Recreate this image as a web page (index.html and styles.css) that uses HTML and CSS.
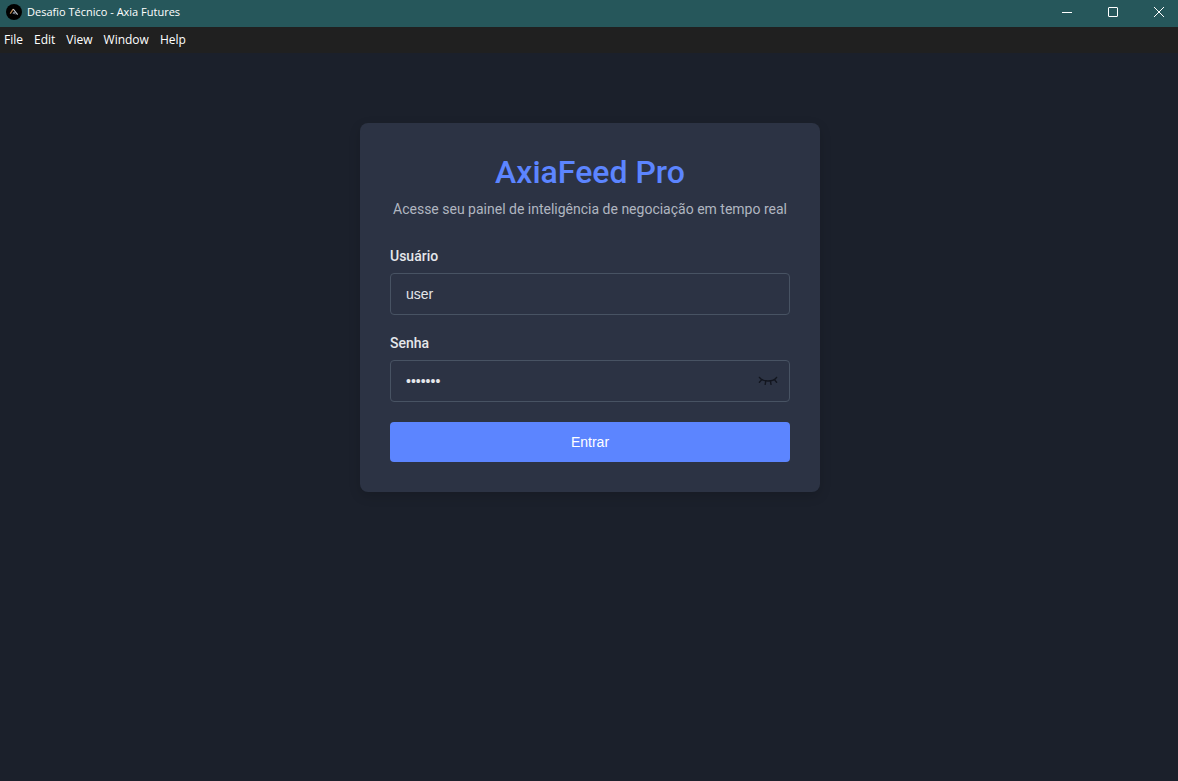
FILE: index.html
```html
<!DOCTYPE html>
<html lang="pt-BR">
<head>
<meta charset="utf-8">
<title>Desafio Técnico - Axia Futures</title>
<link rel="stylesheet" href="styles.css">
</head>
<body>
<header class="titlebar">
  <svg class="app-icon" width="16" height="16" viewBox="0 0 16 16" aria-hidden="true">
    <circle cx="8" cy="8" r="8" fill="#000"/>
    <path d="M4.2 9.6 L7.2 5.2" fill="none" stroke="#c08a54" stroke-width="1.2"/>
    <path d="M7.2 5 L11.6 10.6" fill="none" stroke="#c4c7ce" stroke-width="1.2"/>
    <path d="M7 10 L8 8 L9.2 10.4" fill="none" stroke="#8d96a6" stroke-width="1"/>
  </svg>
  <span class="window-title">Desafio Técnico - Axia Futures</span>
  <div class="window-controls">
    <button class="window-button" type="button" aria-label="Minimize">
      <svg width="10" height="10" viewBox="0 0 10 10"><path d="M0 5.5H10" stroke="#fff"/></svg>
    </button>
    <button class="window-button" type="button" aria-label="Maximize">
      <svg width="10" height="10" viewBox="0 0 10 10"><rect x=".5" y=".5" width="9" height="9" rx=".5" fill="none" stroke="#fff"/></svg>
    </button>
    <button class="window-button" type="button" aria-label="Close">
      <svg width="10" height="10" viewBox="0 0 10 10"><path d="M0 0L10 10M10 0L0 10" stroke="#fff"/></svg>
    </button>
  </div>
</header>
<nav class="menubar">
  <button class="menu-item" type="button">File</button>
  <button class="menu-item" type="button">Edit</button>
  <button class="menu-item" type="button">View</button>
  <button class="menu-item" type="button">Window</button>
  <button class="menu-item" type="button">Help</button>
</nav>
<main class="page">
  <form class="card">
    <h1 class="brand">AxiaFeed Pro</h1>
    <p class="subtitle">Acesse seu painel de inteligência de negociação em tempo real</p>
    <div class="field">
      <label class="label" for="user">Usuário</label>
      <input class="input" id="user" type="text" value="user">
    </div>
    <div class="field">
      <label class="label" for="password">Senha</label>
      <div class="password">
        <input class="input" id="password" type="password" value="senha12">
        <button class="reveal" type="button" aria-label="Mostrar senha">
          <svg width="20" height="20" viewBox="0 0 20 20" fill="none" stroke="#13161f" stroke-width="1.4" stroke-linecap="round">
            <path d="M1.4 7.4C4.4 12.2 15.6 12.2 18.6 7.4"/>
            <path d="M3.8 9.6L1.4 12.2M7.8 10.9L7.2 14.4M12.4 10.9L13 14.4M16.4 9.6L18.6 12.2"/>
          </svg>
        </button>
      </div>
    </div>
    <button class="submit" type="button">Entrar</button>
  </form>
</main>
</body>
</html>
```
FILE: styles.css
```css
* {
  box-sizing: border-box;
}

body {
  margin: 0;
  min-height: 100vh;
  display: flex;
  flex-direction: column;
  background: #1b202b;
  color: #e5e7eb;
  font-family: Roboto, sans-serif;
  font-size: 14px;
}

button {
  border: 0;
  padding: 0;
  background: none;
  color: inherit;
}

svg {
  display: block;
}

.titlebar {
  display: flex;
  align-items: center;
  height: 27px;
  padding: 0 0 4px 6px;
  background: #26575b;
  color: #fff;
}

.window-title {
  margin-left: 5px;
  font: 11px/16px "Open Sans", sans-serif;
}

.window-controls {
  display: flex;
  gap: 8px;
  margin-left: auto;
}

.window-button {
  display: grid;
  place-items: center;
  width: 38px;
  height: 22px;
}

.menubar {
  display: flex;
  gap: 11px;
  height: 26px;
  padding-left: 4px;
  background: #202020;
}

.menu-item {
  color: #fff;
  font: 12px/16px "Open Sans", sans-serif;
}

.page {
  flex: 1;
  padding: 70px 20px 20px 22px;
}

.card {
  max-width: 460px;
  margin: 0 auto;
  padding: 30px;
  border-radius: 8px;
  background: #2c3344;
  box-shadow: 0 4px 12px rgba(0, 0, 0, 0.15);
}

.brand {
  margin: 0 0 8px;
  color: #5c85ff;
  font-size: 32px;
  font-weight: 500;
  line-height: 38px;
  text-align: center;
}

.subtitle {
  margin: 0 0 29px;
  color: #b0b6c0;
  line-height: 20px;
  text-align: center;
}

.field {
  margin-bottom: 20px;
}

.label {
  display: block;
  margin-bottom: 8px;
  font-weight: 500;
  line-height: 17px;
}

.input {
  display: block;
  width: 100%;
  height: 42px;
  padding: 12px 15px;
  border: 1px solid #485363;
  border-radius: 4px;
  outline: 0;
  background: transparent;
  color: #e5e7eb;
  font: 14px "Liberation Sans", Arial, sans-serif;
}

.password {
  position: relative;
}

.reveal {
  position: absolute;
  top: 10px;
  right: 12px;
}

.submit {
  display: block;
  width: 100%;
  height: 40px;
  border-radius: 4px;
  background: #5c85ff;
  color: #fff;
  font: 14px "Liberation Sans", Arial, sans-serif;
}
```
